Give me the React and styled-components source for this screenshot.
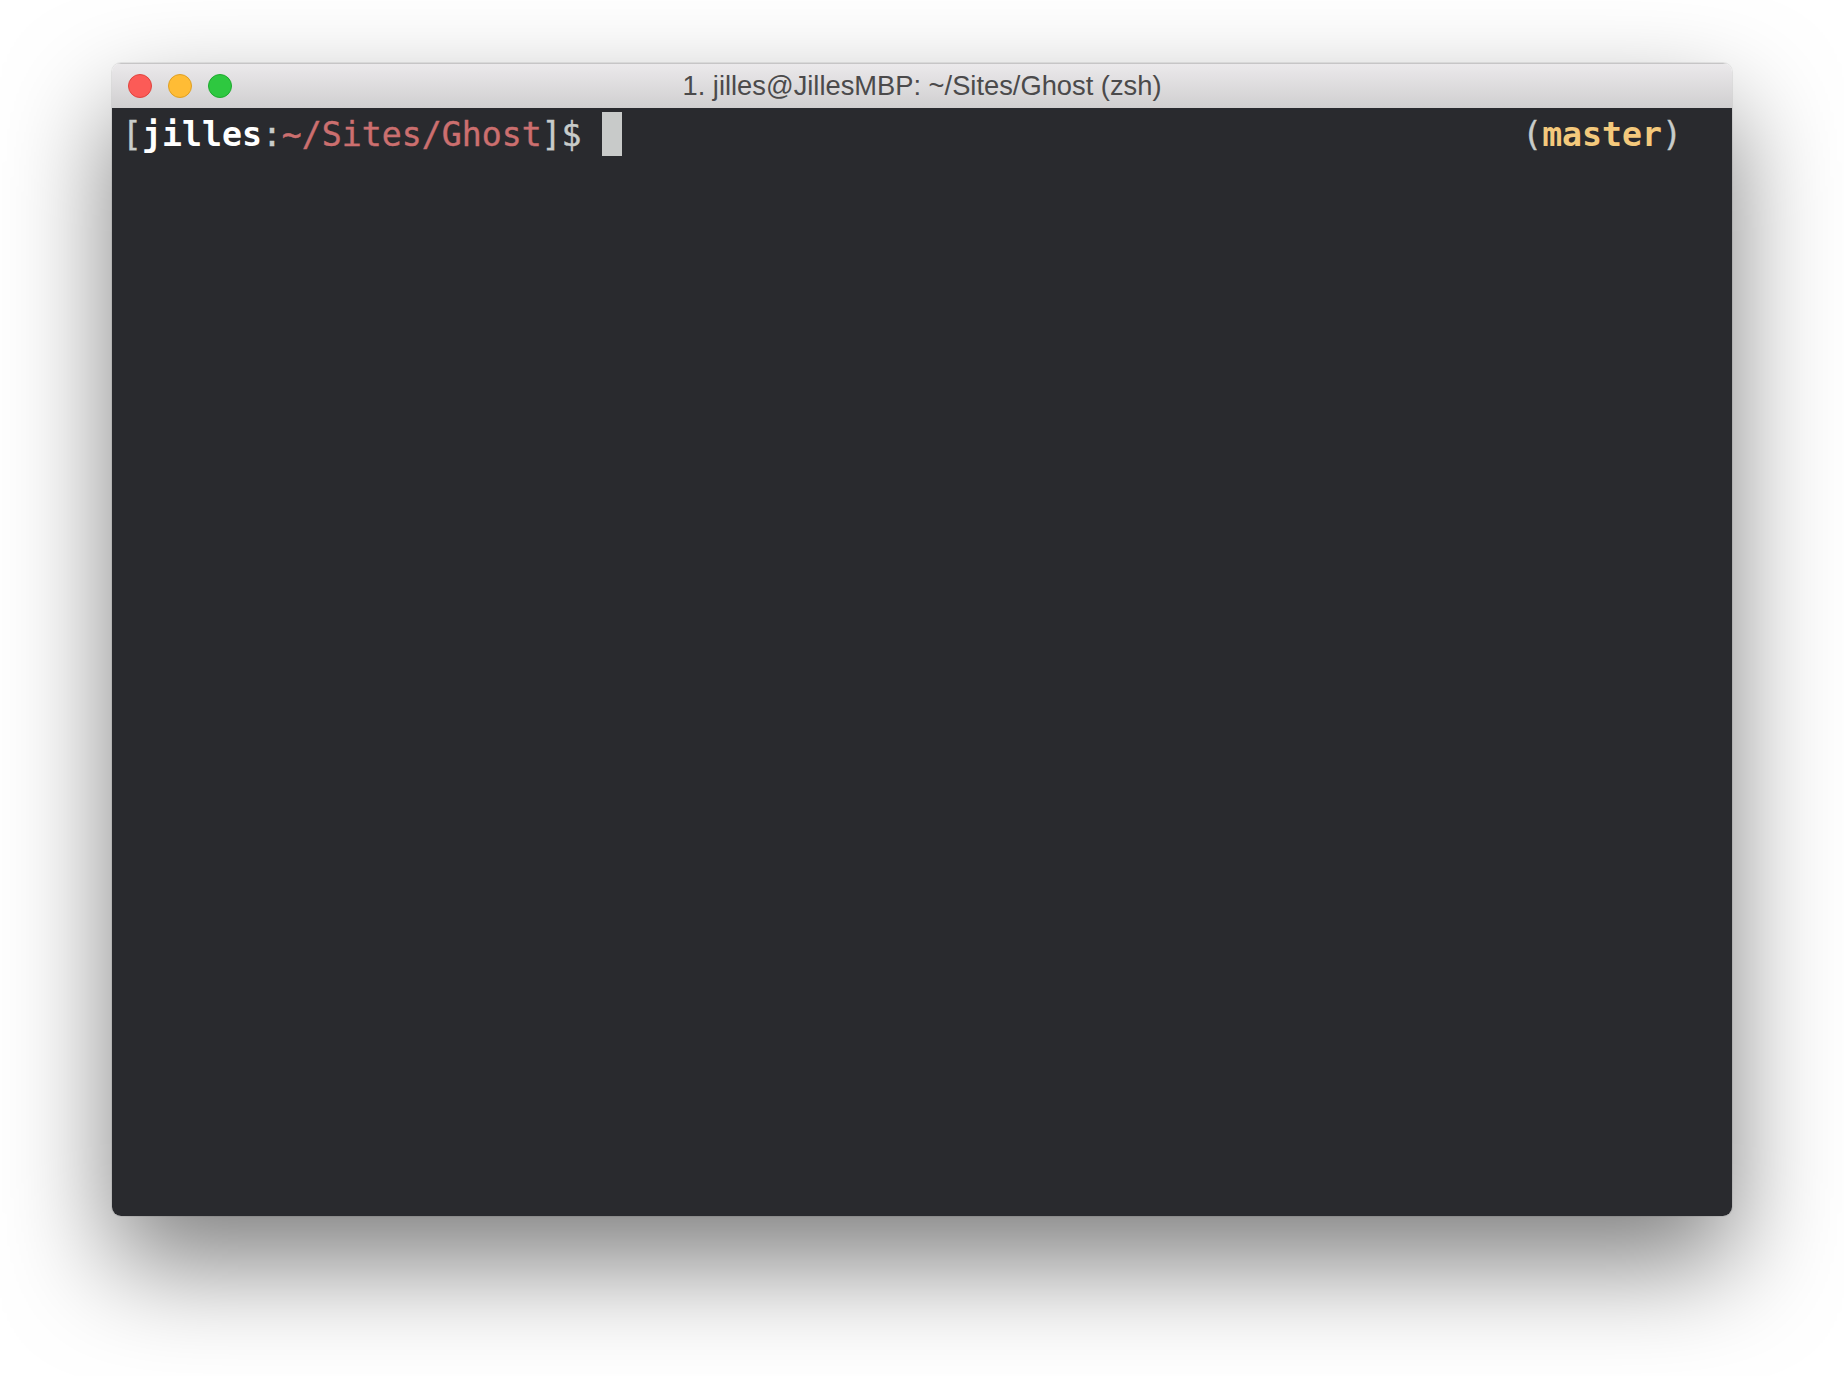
import React from "react";
import styled, { createGlobalStyle } from "styled-components";

const GlobalStyle = createGlobalStyle`
  html, body {
    margin: 0;
    padding: 0;
    background: #fff;
  }
`;

const Page = styled.div`
  width: 1844px;
  height: 1376px;
  box-sizing: border-box;
  padding: 63px 112px 0;
  overflow: hidden;
`;

const Window = styled.div`
  width: 1620px;
  height: 1153px;
  display: flex;
  flex-direction: column;
  border-radius: 9px;
  overflow: hidden;
  box-shadow: 0 0 0 1px rgba(0, 0, 0, 0.07), 0 48px 105px rgba(0, 0, 0, 0.5);
`;

const TitleBar = styled.div`
  height: 45px;
  flex: none;
  display: grid;
  grid-template-columns: 1fr auto 1fr;
  align-items: center;
  padding: 0 16px;
  background: linear-gradient(#ebe9eb, #d0cfd0);
  border-top: 1px solid #c6c5c6;
  box-sizing: border-box;
`;

const Lights = styled.div`
  display: flex;
  gap: 16px;
`;

const Light = styled.span`
  width: 24px;
  height: 24px;
  box-sizing: border-box;
  border-radius: 50%;
  background: ${(p) => p.$fill};
  border: 1px solid ${(p) => p.$edge};
`;

const Title = styled.div`
  font-family: "Liberation Sans", Arial, sans-serif;
  font-size: 27.3px;
  color: #4b4a4b;
  white-space: nowrap;
`;

const Terminal = styled.div`
  flex: 1;
  background: #292a2e;
  padding: 4px 50px 0 10px;
  display: flex;
  justify-content: space-between;
  align-items: flex-start;
  font-family: "DejaVu Sans Mono", "Liberation Mono", monospace;
  font-size: 33.2px;
  line-height: 46px;
  white-space: pre;
`;

const Prompt = styled.div`
  display: flex;
  align-items: flex-start;
`;

const Segment = styled.span`
  color: ${(p) => p.$color};
  font-weight: ${(p) => (p.$bold ? 700 : 400)};
  -webkit-text-stroke: ${(p) => (p.$bold ? "0" : "0.4px")};
`;

const Cursor = styled.span`
  width: 20px;
  height: 44px;
  background: #c8cac9;
`;

export default function App() {
  return (
    <Page>
      <GlobalStyle />
      <Window>
        <TitleBar>
          <Lights>
            <Light $fill="#fc5b57" $edge="#e0443e" />
            <Light $fill="#ffbc35" $edge="#dfa023" />
            <Light $fill="#2ec840" $edge="#1eaa2e" />
          </Lights>
          <Title>1. jilles@JillesMBP: ~/Sites/Ghost (zsh)</Title>
        </TitleBar>
        <Terminal>
          <Prompt>
            <Segment $color="#c8ccca">[</Segment>
            <Segment $color="#ffffff" $bold>jilles</Segment>
            <Segment $color="#c8ccca">:</Segment>
            <Segment $color="#cc6f6f">~/Sites/Ghost</Segment>
            <Segment $color="#c8ccca">]$ </Segment>
            <Cursor />
          </Prompt>
          <div>
            <Segment $color="#c8ccca">(</Segment>
            <Segment $color="#f4c97c" $bold>master</Segment>
            <Segment $color="#c8ccca">)</Segment>
          </div>
        </Terminal>
      </Window>
    </Page>
  );
}
